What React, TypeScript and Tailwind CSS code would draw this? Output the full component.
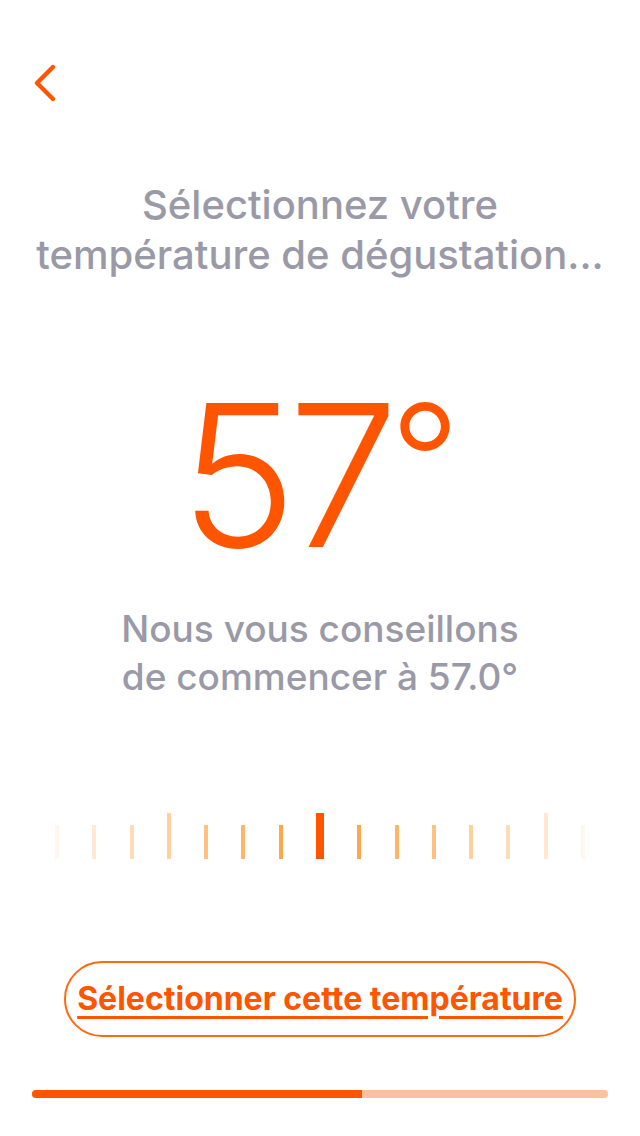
const ticks = Array.from({ length: 15 }, (_, i) => i);

function Tick({ i }: { i: number }) {
  const d = Math.abs(i - 7);
  if (d === 0) return <div className="h-[46px] w-[8px] bg-[#ff5500]" />;
  const tall = i === 3 || i === 13;
  const opacity = Math.max(0.08, 1 - d * 0.13);
  return (
    <div
      className={`w-[4px] bg-[#ff9a33] ${tall ? "h-[46px]" : "h-[34px]"}`}
      style={{ opacity }}
    />
  );
}

export default function App() {
  return (
    <div className="flex h-[1136px] w-[640px] flex-col bg-white font-['Inter',sans-serif]">
      <button className="ml-[32px] mt-[63px] flex h-[40px] w-[24px] text-[#ff5500]">
        <svg viewBox="0 0 24 40" className="h-[40px] w-[24px]" fill="none">
          <path
            d="M21 4L5 20L21 36"
            stroke="currentColor"
            strokeWidth="4.4"
            strokeLinecap="round"
            strokeLinejoin="round"
          />
        </svg>
      </button>

      <h1 className="mt-[77px] text-center text-[40px] leading-[50px] font-medium text-[#9a99a7]">
        Sélectionnez votre
        <br />
        température de dégustation...
      </h1>

      <div className="mt-[105px] h-[180px] text-center text-[198px] leading-[180px] font-light text-[#ff5500] tracking-[-9px]">
        57<span className="align-[31px] text-[155px] leading-[0] tracking-normal">°</span>
      </div>

      <p className="mt-[40px] text-center text-[37px] leading-[48px] font-medium text-[#9a99a7]">
        Nous vous conseillons
        <br />
        de commencer à 57.0°
      </p>

      <div className="mt-[112px] flex h-[46px] items-end justify-between px-[55px]">
        {ticks.map((i) => (
          <Tick key={i} i={i} />
        ))}
      </div>

      <div className="mt-[102px] flex justify-center">
        <button className="flex h-[76px] w-[512px] items-center justify-center rounded-full border-2 border-[#ff6a10] text-[32px] font-bold text-[#ff5500] underline decoration-[3px] underline-offset-[6px]">
          Sélectionner cette température
        </button>
      </div>

      <div className="mx-[32px] mt-[53px] flex h-[8px] overflow-hidden rounded-full bg-[#ffc0a0]">
        <div className="h-full w-[330px] bg-[#ff5500]" />
      </div>
    </div>
  );
}
